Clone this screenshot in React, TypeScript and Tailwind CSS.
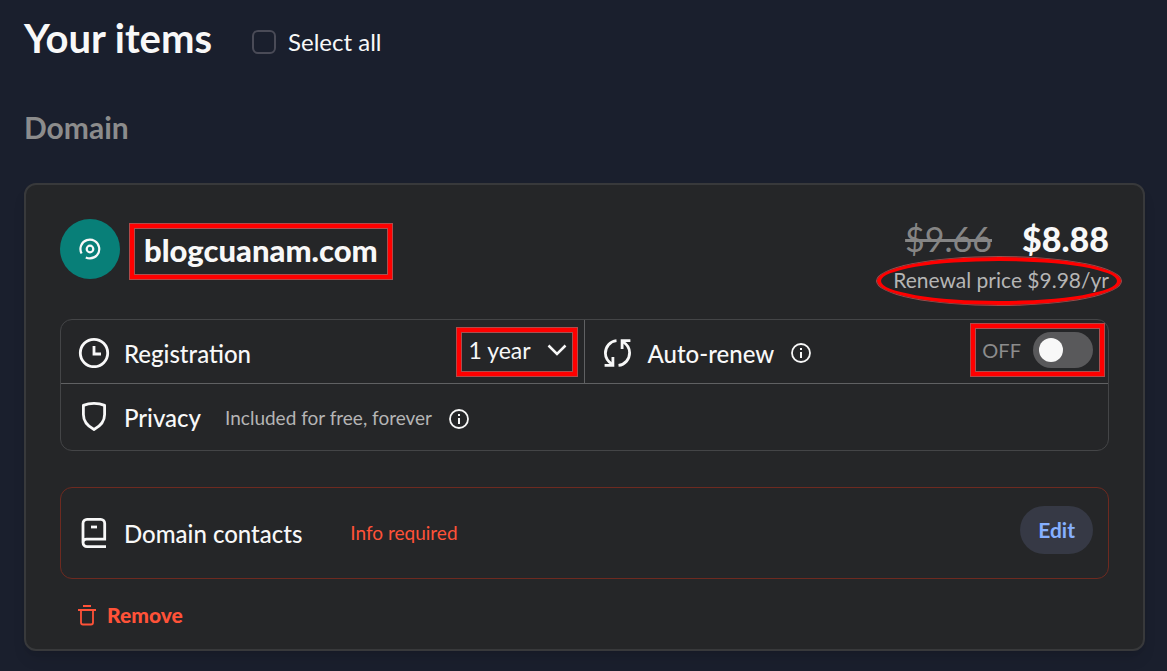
import React, { useState } from 'react';

const frame =
  'border-4 border-[#ff0000] outline outline-1 outline-[#b04a4a] inset-ring-1 inset-ring-[#a85050]';

const ClockIcon = () => (
  <svg width="32" height="32" viewBox="0 0 32 32" fill="none" stroke="#f8f8f8" strokeWidth="2.8" aria-hidden="true">
    <circle cx="16" cy="17" r="13.7" />
    <path d="M16 10v8h7" />
  </svg>
);

const RenewIcon = () => (
  <svg width="32" height="32" viewBox="0 0 32 32" fill="none" stroke="#f8f8f8" strokeWidth="2.8" aria-hidden="true">
    <path d="M14.500 4.600C8 5.200 3.400 10.800 3.400 17.200c0 4.600 2.600 8.600 7.400 11.400" />
    <path d="M2.600 29.400h8.300V21" />
    <path d="M16.500 29.400c6.500-.6 11.100-6.200 11.100-12.600 0-4.600-2.600-8.600-7.400-11.400" />
    <path d="M28.400 4.600h-8.300V13" />
  </svg>
);

const ShieldIcon = () => (
  <svg width="32" height="32" viewBox="0 0 32 32" fill="none" stroke="#f8f8f8" strokeWidth="2.8" strokeLinejoin="round" aria-hidden="true">
    <path d="M5.400 4.400C9 2.800 12.500 2.300 16 2.300s7 .5 10.600 2.100V13.600c0 6.500-4 11.500-10.600 15C9.400 25.100 5.400 20.100 5.400 13.600z" />
  </svg>
);

const BookIcon = () => (
  <svg width="32" height="32" viewBox="0 0 32 32" fill="none" stroke="#f8f8f8" strokeWidth="2.8" aria-hidden="true">
    <path d="M28 29.600H9a4 4 0 0 1-4-4V6.400a4 4 0 0 1 4-4h13.700a4 4 0 0 1 4 4v15.800H8.500a3.500 3.500 0 0 0-3.500 3.500" />
    <path d="M13 10h6" />
  </svg>
);

const InfoIcon = () => (
  <svg width="22" height="22" viewBox="0 0 22 22" fill="none" stroke="#f8f8f8" strokeWidth="1.8" aria-hidden="true">
    <circle cx="11" cy="11" r="9" />
    <path d="M11 10v6M11 6v2" strokeWidth="2" />
  </svg>
);

const TrashIcon = () => (
  <svg width="20" height="22" viewBox="0 0 20 22" fill="none" stroke="#ff5238" strokeWidth="1.8" aria-hidden="true">
    <path d="M6 2h8M1 6h18" />
    <path d="M4 6v12.500a2 2 0 0 0 2 2h8a2 2 0 0 0 2-2V6" />
  </svg>
);

const DomainIcon = () => (
  <svg width="22" height="22" viewBox="0 0 22 22" fill="none" stroke="#f8f8f8" strokeWidth="2.2" aria-hidden="true">
    <circle cx="11" cy="11" r="3.3" />
    <path d="M2.600 15.500A9.400 9.400 0 1 1 11 20.400c-1.600 0-3-.4-4.200-1" />
  </svg>
);

const App = () => {
  const [autoRenew, setAutoRenew] = useState(false);

  return (
    <main className="min-h-screen bg-[#1a1f2d] pt-[15px] pr-[22px] pb-5 pl-6 font-['Lato','Liberation_Sans',sans-serif] text-[#f8f8f8]">
      <header className="flex items-start gap-10">
        <h1 className="text-[40px] leading-[46px] font-bold">Your items</h1>
        <label className="flex items-center gap-3 pt-[11px] text-2xl leading-8">
          <input
            type="checkbox"
            className="size-6 appearance-none rounded-md border-2 border-[#4a4b57] checked:bg-[#86b0ff]"
          />
          Select all
        </label>
      </header>

      <h2 className="mt-12 text-[30px] leading-9 font-bold text-[#8c8c8c]">Domain</h2>

      <section className="mt-[38px] rounded-xl border-2 border-[#38393b] bg-[#252628] px-[34px] pt-[34px] pb-[18px] shadow-lg">
        <div className="flex items-start justify-between">
          <div className="flex items-center gap-2.5">
            <span className="flex size-[60px] items-center justify-center rounded-full bg-[#087f78]">
              <DomainIcon />
            </span>
            <h3 className={`${frame} mt-1 px-2.5 pt-1 pb-[7px] text-[31px] leading-9 font-black`}>blogcuanam.com</h3>
          </div>

          <div className="relative text-right">
            <p className="flex justify-end gap-[30px] text-[34px] leading-10">
              <s className="text-[#858585]">$9.66</s>
              <strong className="font-black">$8.88</strong>
            </p>
            <p className="pt-px text-[21px] leading-10 text-[#b5b5b5]">Renewal price $9.98/yr</p>
            <span className="pointer-events-none absolute -right-3 -left-4 top-[38px] h-12 rounded-[50%] border-4 border-[#ff0000] outline outline-1 outline-[#a04a4a]" />
          </div>
        </div>

        <div className="mt-[19px] rounded-xl border border-[#444547]">
          <div className="grid grid-cols-2 border-b border-[#606163]">
            <div className="flex h-[63px] items-center border-r border-[#606163] pr-[7px] pl-[17px]">
              <ClockIcon />
              <label htmlFor="term" className="pt-1 pl-3.5 text-2xl leading-8 font-medium">
                Registration
              </label>
              <div className={`${frame} relative ml-auto`}>
                <select id="term" className="w-28 appearance-none pt-0.5 pb-1.5 pl-2 text-[23px] leading-8 outline-none">
                  <option>1 year</option>
                  <option>2 years</option>
                  <option>3 years</option>
                </select>
                <svg
                  className="pointer-events-none absolute top-3 right-1.5"
                  width="20"
                  height="12"
                  viewBox="0 0 20 12"
                  fill="none"
                  stroke="#f8f8f8"
                  strokeWidth="2.5"
                >
                  <path d="M1.500 1.500 10 10l8.500-8.500" />
                </svg>
              </div>
            </div>

            <div className="flex h-[63px] items-center pr-1 pl-[17px]">
              <RenewIcon />
              <span id="renew" className="pt-1 pl-3.5 text-2xl leading-8 font-medium">
                Auto-renew
              </span>
              <button type="button" aria-label="About auto-renew" className="mt-0.5 ml-4">
                <InfoIcon />
              </button>
              <div className={`${frame} mb-1 ml-auto flex items-center gap-3 py-1 pr-[7px] pl-[7px]`}>
                <span className="text-xl leading-8 text-[#8c8c8c]">{autoRenew ? 'ON' : 'OFF'}</span>
                <button
                  type="button"
                  role="switch"
                  aria-checked={autoRenew}
                  aria-labelledby="renew"
                  onClick={() => setAutoRenew(!autoRenew)}
                  className={`flex h-9 w-[60px] items-center rounded-full bg-[#59595b] px-1.5 ${autoRenew ? 'justify-end' : 'justify-start'}`}
                >
                  <span className="size-6 rounded-full bg-[#f8f8f8]" />
                </button>
              </div>
            </div>
          </div>

          <div className="flex h-[66px] items-center pl-[17px]">
            <ShieldIcon />
            <span className="pt-0.5 pl-3.5 text-2xl leading-8 font-medium">Privacy</span>
            <span className="pt-0.5 pl-6 text-[19px] leading-8 text-[#b5b5b5]">Included for free, forever</span>
            <button type="button" aria-label="About privacy" className="mt-1 ml-4">
              <InfoIcon />
            </button>
          </div>
        </div>

        <div className="mt-9 flex items-center rounded-xl border border-[#6e2a20] pt-[18px] pr-[15px] pb-6 pl-[17px]">
          <div className="flex items-center pt-1.5">
            <BookIcon />
            <span className="pt-0.5 pl-3.5 text-2xl leading-8 font-medium">Domain contacts</span>
          </div>
          <span className="pt-1.5 pl-12 text-[19px] leading-8 text-[#ff5238]">Info required</span>
          <button type="button" className="ml-auto h-12 rounded-full bg-[#363945] px-[18px] text-[21px] leading-8 font-bold text-[#86b0ff]">
            Edit
          </button>
        </div>

        <button type="button" className="mt-5 ml-[17px] flex items-center gap-2.5 text-[21px] leading-8 font-black text-[#ff5238]">
          <TrashIcon />
          Remove
        </button>
      </section>
    </main>
  );
};

export default App;
